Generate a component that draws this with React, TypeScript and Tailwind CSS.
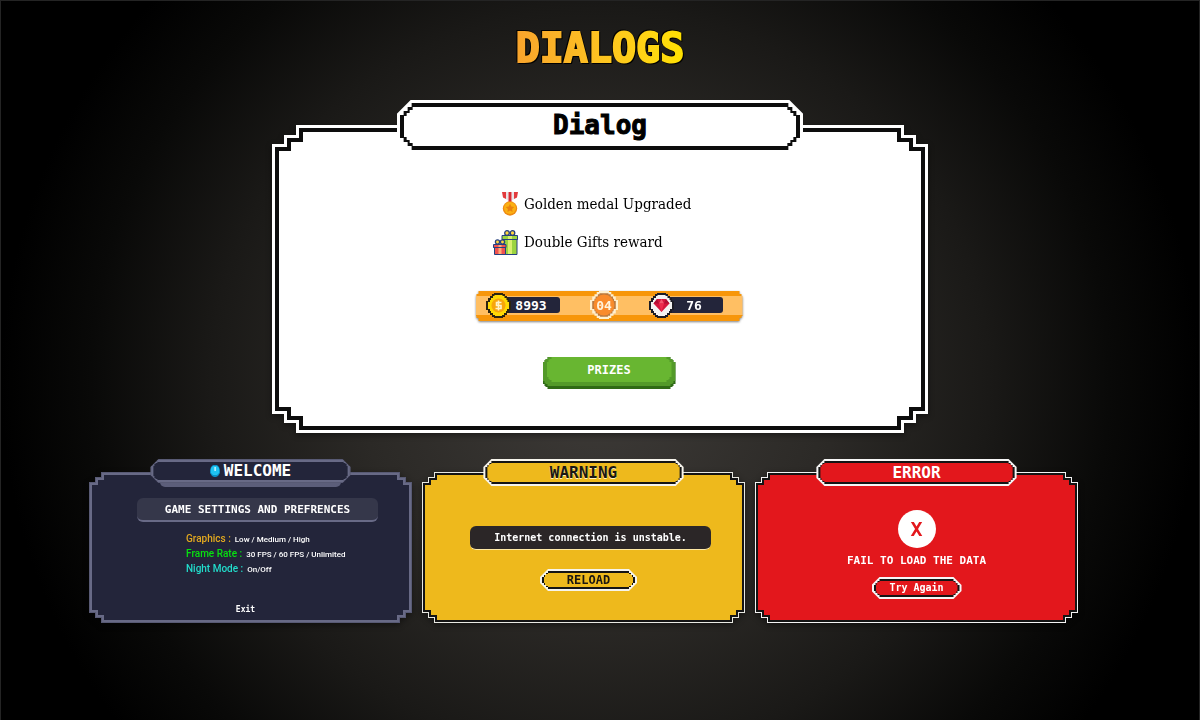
import type { ReactNode } from "react";

// Corner outlines. The step sizes come from the --x/--y/--s/--b variables of the size classes below.
const NOTCHED =
  "[clip-path:polygon(0_var(--y2),var(--x1)_var(--y2),var(--x1)_var(--y1),var(--x2)_var(--y1),var(--x2)_0,calc(100%_-_var(--x2))_0,calc(100%_-_var(--x2))_var(--y1),calc(100%_-_var(--x1))_var(--y1),calc(100%_-_var(--x1))_var(--y2),100%_var(--y2),100%_calc(100%_-_var(--y2)),calc(100%_-_var(--x1))_calc(100%_-_var(--y2)),calc(100%_-_var(--x1))_calc(100%_-_var(--y1)),calc(100%_-_var(--x2))_calc(100%_-_var(--y1)),calc(100%_-_var(--x2))_100%,var(--x2)_100%,var(--x2)_calc(100%_-_var(--y1)),var(--x1)_calc(100%_-_var(--y1)),var(--x1)_calc(100%_-_var(--y2)),0_calc(100%_-_var(--y2)))]";
const PLATE =
  "[clip-path:polygon(0_var(--s3),var(--s1)_var(--s3),var(--s1)_var(--s2),var(--s2)_var(--s2),var(--s2)_var(--s1),var(--s3)_var(--s1),var(--s3)_0,calc(100%_-_var(--s3))_0,calc(100%_-_var(--s3))_var(--s1),calc(100%_-_var(--s2))_var(--s1),calc(100%_-_var(--s2))_var(--s2),calc(100%_-_var(--s1))_var(--s2),calc(100%_-_var(--s1))_var(--s3),100%_var(--s3),100%_calc(100%_-_var(--s3)),calc(100%_-_var(--s1))_calc(100%_-_var(--s3)),calc(100%_-_var(--s1))_calc(100%_-_var(--s2)),calc(100%_-_var(--s2))_calc(100%_-_var(--s2)),calc(100%_-_var(--s2))_calc(100%_-_var(--s1)),calc(100%_-_var(--s3))_calc(100%_-_var(--s1)),calc(100%_-_var(--s3))_100%,var(--s3)_100%,var(--s3)_calc(100%_-_var(--s1)),var(--s2)_calc(100%_-_var(--s1)),var(--s2)_calc(100%_-_var(--s2)),var(--s1)_calc(100%_-_var(--s2)),var(--s1)_calc(100%_-_var(--s3)),0_calc(100%_-_var(--s3)))]";
const BEVEL =
  "[clip-path:polygon(0_var(--b),var(--b)_0,calc(100%_-_var(--b))_0,100%_var(--b),100%_calc(100%_-_var(--b)),calc(100%_-_var(--b))_100%,var(--b)_100%,0_calc(100%_-_var(--b)))]";

const LARGE = "[--b:14px] [--x1:12px] [--x2:24px] [--y1:10px] [--y2:19px] [--s1:4px] [--s2:8px] [--s3:12px]";
const SMALL = "[--b:8px] [--x1:6px] [--x2:12px] [--y1:5px] [--y2:10px] [--s1:2px] [--s2:4px] [--s3:6px]";
const LARGE_FACE = "[--s1:3px] [--s2:6px] [--s3:9px]";
const SMALL_FACE = "[--s1:1px] [--s2:2px] [--s3:4px]";

const PIXEL = "font-['DejaVu_Sans_Mono','Liberation_Mono',monospace] font-bold";

type Skin = { rim: string; line: string; fill: string };

const WHITE_SKIN: Skin = { rim: "bg-white p-[3px]", line: "bg-[#0d0d0d] p-1", fill: "bg-white" };
const NAVY_SKIN: Skin = { rim: "bg-[#585a74] p-px", line: "bg-[#686a86] p-0.5", fill: "bg-[#23253a]" };
const YELLOW_SKIN: Skin = { rim: "bg-[#e8e8e2] p-px", line: "bg-[#141414] p-0.5", fill: "bg-[#eeb91c]" };
const RED_SKIN: Skin = { rim: "bg-[#f3f3f3] p-px", line: "bg-[#141414] p-0.5", fill: "bg-[#e3171c]" };

function Frame({ skin, size, children }: { skin: Skin; size: string; children: ReactNode }) {
  return (
    <div className="flex flex-1 flex-col drop-shadow-[0_2px_3px_rgba(0,0,0,0.45)]">
      <div className={`flex flex-1 ${size} ${NOTCHED} ${skin.rim}`}>
        <div className={`flex flex-1 ${NOTCHED} ${skin.line}`}>
          <div className={`flex flex-1 flex-col ${NOTCHED} ${skin.fill}`}>{children}</div>
        </div>
      </div>
    </div>
  );
}

function SmallDialog({
  skin,
  title,
  titleColor,
  rim,
  shade,
  children,
}: {
  skin: Skin;
  title: ReactNode;
  titleColor: string;
  rim: string;
  shade?: boolean;
  children: ReactNode;
}) {
  return (
    <section className="flex flex-col">
      <header className="relative z-10 mx-auto -mb-[14px] flex h-[27px] w-[62%] flex-col">
        <div className={`z-10 flex shrink-0 ${shade ? "h-6" : "h-[27px]"} ${SMALL} ${BEVEL} ${rim}`}>
          <div className={`flex flex-1 ${PLATE} ${skin.line}`}>
            <h2
              className={`flex flex-1 items-center justify-center gap-1 text-[16px] leading-none ${PIXEL} ${SMALL_FACE} ${PLATE} ${skin.fill} ${titleColor}`}
            >
              {title}
            </h2>
          </div>
        </div>
        {shade && <div className="mx-[10px] -mt-px h-[5px] shrink-0 rounded-b-[10px] bg-[#5c5e7a]" />}
      </header>
      <Frame skin={skin} size={SMALL}>
        {children}
      </Frame>
    </section>
  );
}

function MedalIcon() {
  return (
    <svg viewBox="0 0 16 24" className="h-6 w-4" aria-hidden="true">
      <path d="M0 0h4v7L1 5.500zM12 0H16l-1 5.500L12 7z" fill="#e23a3d" />
      <path d="M4 0h2.500v9L4 7zM9.500 0h2.500v7l-2.500 2z" fill="#e9e4e6" />
      <path d="M6.500 0h3v10h-3z" fill="#d82c34" />
      <circle cx="8" cy="16.500" r="7.200" fill="#ee8a12" />
      <circle cx="8" cy="16" r="6" fill="#fbb012" />
      <path d="M8 11.800l1.300 2.700 3 .4-2.200 2.100.5 3L8 18.600 5.400 20l.5-3-2.200-2.100 3-.4z" fill="#e9820f" />
    </svg>
  );
}

function GiftsIcon() {
  return (
    <svg viewBox="0 0 25 25" className="h-[25px] w-[25px]" aria-hidden="true">
      <path d="M9 5.500h15.500v4H24V24.500H10V9.500H9z" fill="#9bd43f" stroke="#26417f" />
      <path d="M15 6h4v18h-4z" fill="#d9ef6f" />
      <path d="M9 9.500h15.500" stroke="#26417f" />
      <circle cx="14" cy="3" r="2.300" fill="#ffd53d" stroke="#26417f" strokeWidth="1.300" />
      <circle cx="19.500" cy="3" r="2.300" fill="#ffd53d" stroke="#26417f" strokeWidth="1.300" />
      <path d="M.5 14.500H13v3h-.5v7H1.500v-7h-1z" fill="#f0524f" stroke="#26417f" />
      <path d="M5.500 15h3v9h-3z" fill="#ffab78" />
      <path d="M.5 17.500H13" stroke="#26417f" />
      <circle cx="4.500" cy="12" r="2.100" fill="#ffd53d" stroke="#26417f" strokeWidth="1.300" />
      <circle cx="9.500" cy="12" r="2.100" fill="#ffd53d" stroke="#26417f" strokeWidth="1.300" />
    </svg>
  );
}

const OCTAGON = "M8 0h9v1h2v2h2v2h2v3h2v9h-2v3h-2v2h-2v2h-2v1H8v-1H6v-2H4v-2H2v-3H0V8h2V5h2V3h2V1h2z";
const OCTAGON_INNER = "M8.500 2h8v1h2v2h2v2h1v2h1.500v7H21v2h-1v2h-2v2h-2v1H9v-1H7v-2H5v-2H4v-2H2V9h2V7h1V5h2V3h1.500z";

function CoinIcon() {
  return (
    <svg viewBox="0 0 25 25" className="relative h-[25px] w-[25px] shrink-0" aria-hidden="true">
      <path d={OCTAGON} fill="#2b2410" />
      <path d={OCTAGON_INNER} fill="#ffd905" />
      <circle cx="12.500" cy="12.500" r="7" fill="#f7a50c" />
      <path
        d="M15.500 9.500h-5v3h4.500v3H9.500M12.500 7.500v10"
        fill="none"
        stroke="#fff3c9"
        strokeWidth="1.600"
      />
    </svg>
  );
}

function GemIcon() {
  return (
    <svg viewBox="0 0 25 25" className="relative h-[25px] w-[25px] shrink-0" aria-hidden="true">
      <path d={OCTAGON} fill="#1c1c26" />
      <path d={OCTAGON_INNER} fill="#f4f2f2" />
      <path d="M8 6h9l3.500 4.500L12.500 19l-8-8.500z" fill="#d6143c" />
      <path d="M8 6l2 4.500H4.500zM17 6l-2 4.500h5.500z" fill="#b00d33" />
      <path d="M10 10.500L12.500 6l2.500 4.500z" fill="#f4566f" />
      <path d="M10 10.500h5L12.500 19z" fill="#ec2a4c" />
    </svg>
  );
}

function Stat({ icon, value }: { icon: ReactNode; value: string }) {
  return (
    <div className="flex items-center">
      {icon}
      <span
        className={`-ml-3 flex h-4 w-[61px] items-center justify-center rounded-r-[3px] bg-[#23253a] pl-1 text-[13px] leading-none text-white ${PIXEL}`}
      >
        {value}
      </span>
    </div>
  );
}

function PlateButton({ skin, rim, className, children }: { skin: Skin; rim: string; className: string; children: ReactNode }) {
  return (
    <button type="button" className={`flex h-[22px] cursor-pointer ${SMALL} ${BEVEL} ${rim} ${className}`}>
      <span className={`flex flex-1 self-stretch ${PLATE} ${skin.line}`}>
        <span className={`flex flex-1 items-center justify-center leading-none ${PIXEL} ${SMALL_FACE} ${PLATE} ${skin.fill}`}>
          {children}
        </span>
      </span>
    </button>
  );
}

const SETTINGS = [
  { label: "Graphics :", color: "text-[#e3a91f]", value: "Low / Medium / High" },
  { label: "Frame Rate :", color: "text-[#08e010]", value: "30 FPS / 60 FPS / Unlimited" },
  { label: "Night Mode :", color: "text-[#22dccb]", value: "On/Off" },
];

const REWARDS = [
  { icon: <MedalIcon />, text: "Golden medal Upgraded" },
  { icon: <GiftsIcon />, text: "Double Gifts reward" },
];

export default function App() {
  return (
    <main className="min-h-screen border-x border-t border-[#242424] bg-black bg-[radial-gradient(ellipse_50%_80%_at_50%_53%,#3e3b38_0%,#2b2926_40%,#1a1917_65%,#090908_85%,#000_100%)] pt-[27px] pb-24">
      <h1
        className={`mx-auto w-fit bg-linear-to-r from-[#f9a42c] to-[#ffe100] bg-clip-text text-[40px] leading-10 text-transparent [-webkit-text-stroke:2px_transparent] [filter:drop-shadow(1px_1px_0_#000)_drop-shadow(-1px_-1px_0_#000)] ${PIXEL}`}
      >
        DIALOGS
      </h1>

      <section className="mx-auto mt-8 flex max-w-[656px] flex-col">
        <header className={`relative z-10 mx-auto -mb-7 flex h-[53px] w-[62%] ${LARGE} ${BEVEL} bg-white p-[3px]`}>
          <div className={`flex flex-1 ${PLATE} bg-[#0d0d0d] p-1`}>
            <h2
              className={`flex flex-1 items-center justify-center bg-white pb-1 text-[26px] leading-none text-black [-webkit-text-stroke:1px_#000] ${PIXEL} ${LARGE_FACE} ${PLATE}`}
            >
              Dialog
            </h2>
          </div>
        </header>
        <Frame skin={WHITE_SKIN} size={LARGE}>
          <div className="flex flex-col items-center pt-[59px] pb-[37px] pl-[18px]">
            <ul className="flex w-[232px] flex-col gap-3 font-['DejaVu_Serif_Condensed','DejaVu_Serif',serif] text-[15px] text-black">
              {REWARDS.map((r) => (
                <li key={r.text} className="flex h-[26px] items-center gap-1.5 whitespace-nowrap">
                  <span className="flex w-[25px] shrink-0 justify-end">{r.icon}</span>
                  {r.text}
                </li>
              ))}
            </ul>

            <div className="mt-9 drop-shadow-[0_1px_1px_rgba(0,0,0,0.5)]">
              <div
                className={`flex h-[30px] w-[267px] items-center justify-between bg-[linear-gradient(#f7960a_5px,#ffbf63_5px,#ffbf63_24px,#f7960a_24px)] pr-5 pb-0.5 pl-[10px] [--x1:1px] [--x2:3px] [--y1:3px] [--y2:5px] ${NOTCHED}`}
              >
                <Stat icon={<CoinIcon />} value="8993" />
                <div className="grid size-[30px] place-items-center">
                  <svg viewBox="0 0 25 25" className="col-start-1 row-start-1 size-7" aria-hidden="true">
                    <path d={OCTAGON} fill="#fff0cf" />
                    <path d={OCTAGON_INNER} fill="#b9783e" />
                    <circle cx="12.500" cy="12.500" r="9.300" fill="#f98b2b" />
                  </svg>
                  <span className={`z-10 col-start-1 row-start-1 text-[13px] leading-none text-[#fff3dc] ${PIXEL}`}>04</span>
                </div>
                <Stat icon={<GemIcon />} value="76" />
              </div>
            </div>

            <button
              type="button"
              className={`mt-9 flex h-8 w-[133px] cursor-pointer bg-[#2f6a15] pb-[3px] [--s1:2px] [--s2:3px] [--s3:5px] ${PLATE}`}
            >
              <span className={`flex flex-1 self-stretch bg-[#539a29] px-1 pb-1 ${PLATE}`}>
                <span
                  className={`flex flex-1 items-center justify-center bg-[#68b631] text-[12px] leading-none text-white ${PIXEL} ${PLATE}`}
                >
                  PRIZES
                </span>
              </span>
            </button>
          </div>
        </Frame>
      </section>

      <div className="mt-[26px] grid grid-cols-1 gap-[10px] px-4 md:grid-cols-3 md:pr-[121px] md:pl-[88px]">
        <SmallDialog
          skin={NAVY_SKIN}
          rim="bg-[#585a74] p-px"
          titleColor="text-white"
          shade
          title={
            <>
              <svg viewBox="0 0 10 12" className="h-3 w-[10px]" aria-hidden="true">
                <path d="M3 0h4l2 2 1 3v3l-2 3-2 1H4l-2-1-2-3V5l1-3z" fill="#0a8fc4" />
                <path d="M3 1h4l2 2v5l-2 2H3L1 8V3z" fill="#1ec3f2" />
                <path d="M4.500 2h1.200v4H4.500z" fill="#eafcff" />
              </svg>
              WELCOME
            </>
          }
        >
          <div className="flex flex-1 flex-col pt-[23px] pb-1 pl-3.5">
            <p
              className={`mx-auto flex h-6 w-[241px] items-center justify-center rounded-md border-b-2 border-[#686a86] bg-[#35374a] text-[11px] leading-none whitespace-nowrap text-white ${PIXEL}`}
            >
              GAME SETTINGS AND PREFRENCES
            </p>
            <dl className="mt-[9px] pl-20 font-[Roboto,'Liberation_Sans',sans-serif] text-[8px] leading-[15px] font-medium text-white">
              {SETTINGS.map((s) => (
                <div key={s.label} className="flex h-[15px] items-baseline gap-1 whitespace-nowrap">
                  <dt className={`text-[10px] ${s.color}`}>{s.label}</dt>
                  <dd>{s.value}</dd>
                </div>
              ))}
            </dl>
            <button
              type="button"
              className={`mx-auto mt-auto cursor-pointer pr-6 text-[8px] leading-3 text-white ${PIXEL}`}
            >
              Exit
            </button>
          </div>
        </SmallDialog>

        <SmallDialog
          skin={YELLOW_SKIN}
          rim="bg-[#f6f4ec] p-0.5"
          titleColor="text-[#1a1712] [text-shadow:0_1px_0_#fff2c4]"
          title="WARNING"
        >
          <div className="flex flex-col items-center pt-[51px] pb-[29px] pl-3.5">
            <p
              className={`flex h-[24px] w-[241px] items-center justify-center rounded-md border-b border-[#ffe9a6] bg-[#2b2627] text-[10px] leading-none whitespace-nowrap text-white ${PIXEL}`}
            >
              Internet connection is unstable.
            </p>
            <PlateButton skin={YELLOW_SKIN} rim="bg-[#f6f4ec] p-0.5" className="mt-[19px] mr-1 w-[97px] text-[12px] text-[#1a1712]">
              RELOAD
            </PlateButton>
          </div>
        </SmallDialog>

        <SmallDialog skin={RED_SKIN} rim="bg-[#f6f6f6] p-0.5" titleColor="text-white" title="ERROR">
          <div className="flex flex-col items-center pt-[35px] pb-[21px]">
            <span
              className={`flex size-[38px] items-center justify-center rounded-full bg-white text-[20px] leading-none text-[#e3171c] ${PIXEL}`}
            >
              X
            </span>
            <p className={`mt-1.5 text-[11px] leading-[14px] text-white ${PIXEL}`}>FAIL TO LOAD THE DATA</p>
            <PlateButton skin={RED_SKIN} rim="bg-[#f6f6f6] p-0.5" className="mt-[9px] w-[90px] text-[10px] text-white">
              Try Again
            </PlateButton>
          </div>
        </SmallDialog>
      </div>
    </main>
  );
}
